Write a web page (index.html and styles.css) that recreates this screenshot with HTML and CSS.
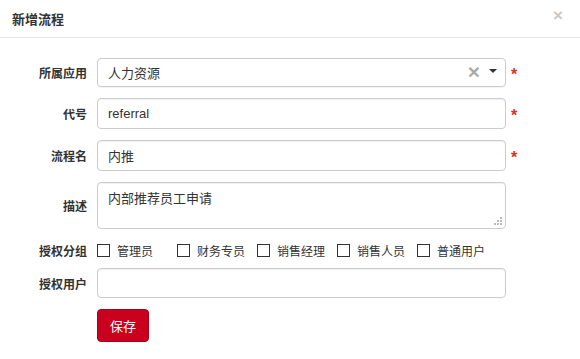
FILE: index.html
```html
<!DOCTYPE html>
<html>
<head>
    <title>新增流程</title>
    <link rel="stylesheet" href="styles.css">
</head>
<body>
    <div class="modal-header">
        <span class="modal-title">新增流程</span>
        <span class="close">&times;</span>
    </div>

    <div class="form">
        <div class="row">
            <label class="label">所属应用</label>
            <div class="field select">
                <span class="value">人力资源</span>
                <span class="clear">&times;</span>
                <span class="caret"></span>
            </div>
            <span class="star">*</span>
        </div>

        <div class="row">
            <label class="label">代号</label>
            <div class="field input">referral</div>
            <span class="star">*</span>
        </div>

        <div class="row">
            <label class="label">流程名</label>
            <div class="field input">内推</div>
            <span class="star">*</span>
        </div>

        <div class="row">
            <label class="label">描述</label>
            <div class="field textarea">
                内部推荐员工申请
                <span class="grip"></span>
            </div>
        </div>

        <div class="row checks">
            <label class="label">授权分组</label>
            <div class="check-list">
                <span class="check"><span class="box"></span>管理员</span>
                <span class="check"><span class="box"></span>财务专员</span>
                <span class="check"><span class="box"></span>销售经理</span>
                <span class="check"><span class="box"></span>销售人员</span>
                <span class="check"><span class="box"></span>普通用户</span>
            </div>
        </div>

        <div class="row">
            <label class="label">授权用户</label>
            <div class="field input user"></div>
        </div>

        <div class="row">
            <span class="label"></span>
            <button class="save-btn">保存</button>
        </div>
    </div>
</body>
</html>
```

FILE: styles.css
```css
body {
    margin: 0;
    background: #fff;
    font-family: "Liberation Sans", "Noto Sans CJK SC", sans-serif;
    color: #333;
}
.modal-header {
    height: 37px;
    padding: 0 12px;
    display: flex;
    align-items: center;
    justify-content: space-between;
    border-bottom: 1px solid #e5e5e5;
}
.modal-title {
    font-size: 13px;
    font-weight: bold;
    color: #333;
}
.close {
    font-size: 17px;
    font-weight: bold;
    color: #c8c8c8;
    margin-right: 5px;
    margin-top: -6px;
}
.form {
    padding-top: 20px;
}
.row {
    display: flex;
    align-items: center;
    margin-bottom: 11px;
}
.label {
    flex: none;
    width: 97px;
    padding-right: 10px;
    box-sizing: border-box;
    text-align: right;
    font-size: 12px;
    font-weight: bold;
    color: #333;
}
.field {
    flex: none;
    width: 409px;
    box-sizing: border-box;
    border: 1px solid #ccc;
    border-radius: 4px;
    padding: 0 10px;
    font-size: 13px;
    color: #333;
    display: flex;
    align-items: center;
}
.select {
    height: 29px;
    box-shadow: 0 1px 1px rgba(0,0,0,0.05);
}
.select .value {
    flex: 1;
}
.clear {
    color: #aaa;
    font-size: 21px;
    font-weight: bold;
    margin-right: 9px;
    margin-top: -1px;
}
.caret {
    width: 0;
    height: 0;
    border-left: 4px solid transparent;
    border-right: 4px solid transparent;
    border-top: 4px solid #333;
    margin-right: -2px;
    margin-top: -3px;
}
.input {
    height: 31px;
    box-shadow: inset 0 1px 1px rgba(0,0,0,0.06);
}
.input.user {
    height: 30px;
}
.textarea {
    height: 47px;
    align-items: flex-start;
    padding-top: 5px;
    position: relative;
    box-shadow: inset 0 1px 1px rgba(0,0,0,0.06);
}
.grip {
    position: absolute;
    right: 3px;
    bottom: 3px;
    width: 8px;
    height: 8px;
    background:
        linear-gradient(#bbb, #bbb) 6px 0 / 2px 2px no-repeat,
        linear-gradient(#bbb, #bbb) 3px 3px / 2px 2px no-repeat,
        linear-gradient(#bbb, #bbb) 6px 3px / 2px 2px no-repeat,
        linear-gradient(#bbb, #bbb) 0 6px / 2px 2px no-repeat,
        linear-gradient(#bbb, #bbb) 3px 6px / 2px 2px no-repeat,
        linear-gradient(#bbb, #bbb) 6px 6px / 2px 2px no-repeat;
}
.star {
    color: #e0301e;
    font-size: 16px;
    font-weight: bold;
    margin-left: 5px;
    margin-top: 4px;
}
.checks {
    height: 18px;
    margin-top: 12px;
    margin-bottom: 9px;
}
.check-list {
    display: flex;
}
.check {
    width: 80px;
    display: flex;
    align-items: center;
    font-size: 12px;
    color: #333;
}
.box {
    width: 11px;
    height: 11px;
    border: 1px solid #333;
    margin-right: 7px;
}
.save-btn {
    width: 52px;
    height: 33px;
    background: #c9001e;
    border: 1px solid #a8001a;
    border-radius: 4px;
    color: #fff;
    font-family: "Liberation Sans", "Noto Sans CJK SC", sans-serif;
    font-size: 13px;
    cursor: pointer;
}
```
